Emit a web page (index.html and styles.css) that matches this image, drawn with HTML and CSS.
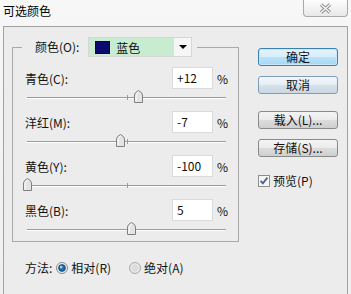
FILE: index.html
```html
<!DOCTYPE html>
<html lang="zh-CN">
<head>
    <meta charset="UTF-8">
    <title>可选颜色</title>
    <link rel="stylesheet" href="styles.css">
</head>
<body>
    <div class="window">
        <div class="titlebar">
            <span class="title">可选颜色</span>
            <button class="close">
                <svg width="13" height="11" viewBox="0 0 13 11">
                    <path d="M2 1.5L11 9.5M11 1.5L2 9.5" stroke="#8e8e8e" stroke-width="3.4"/>
                    <path d="M2 1.5L11 9.5M11 1.5L2 9.5" stroke="#f8f8f8" stroke-width="1.4"/>
                </svg>
            </button>
        </div>

        <div class="dialog">
            <div class="main">
                <fieldset class="group">
                    <legend class="legend">
                        <span class="legend-label">颜色(O):</span>
                        <span class="select">
                            <span class="select-value"><span class="swatch"></span>蓝色</span>
                            <span class="select-arrow"></span>
                        </span>
                    </legend>

                    <div class="row">
                        <div class="row-top">
                            <span class="label">青色(C):</span>
                            <span class="field">+12</span>
                            <span class="unit">%</span>
                        </div>
                        <div class="slider">
                            <span class="tick"></span>
                            <svg class="thumb" style="left: 56%" width="9" height="13" viewBox="0 0 9 13"><path d="M0.5 12.5V5Q0.5 2.5 4.5 0.5Q8.5 2.5 8.5 5V12.5Z" fill="#e4e4e4" stroke="#7f7f7f"/><path d="M2 11.5V5.5Q2 3.5 4.5 2" fill="none" stroke="#fff"/></svg>
                        </div>
                    </div>

                    <div class="row">
                        <div class="row-top">
                            <span class="label">洋红(M):</span>
                            <span class="field">-7</span>
                            <span class="unit">%</span>
                        </div>
                        <div class="slider">
                            <span class="tick"></span>
                            <svg class="thumb" style="left: 46.5%" width="9" height="13" viewBox="0 0 9 13"><path d="M0.5 12.5V5Q0.5 2.5 4.5 0.5Q8.5 2.5 8.5 5V12.5Z" fill="#e4e4e4" stroke="#7f7f7f"/><path d="M2 11.5V5.5Q2 3.5 4.5 2" fill="none" stroke="#fff"/></svg>
                        </div>
                    </div>

                    <div class="row">
                        <div class="row-top">
                            <span class="label">黄色(Y):</span>
                            <span class="field">-100</span>
                            <span class="unit">%</span>
                        </div>
                        <div class="slider">
                            <span class="tick"></span>
                            <svg class="thumb" style="left: 0%" width="9" height="13" viewBox="0 0 9 13"><path d="M0.5 12.5V5Q0.5 2.5 4.5 0.5Q8.5 2.5 8.5 5V12.5Z" fill="#e4e4e4" stroke="#7f7f7f"/><path d="M2 11.5V5.5Q2 3.5 4.5 2" fill="none" stroke="#fff"/></svg>
                        </div>
                    </div>

                    <div class="row">
                        <div class="row-top">
                            <span class="label">黑色(B):</span>
                            <span class="field">5</span>
                            <span class="unit">%</span>
                        </div>
                        <div class="slider">
                            <span class="tick"></span>
                            <svg class="thumb" style="left: 52.5%" width="9" height="13" viewBox="0 0 9 13"><path d="M0.5 12.5V5Q0.5 2.5 4.5 0.5Q8.5 2.5 8.5 5V12.5Z" fill="#e4e4e4" stroke="#7f7f7f"/><path d="M2 11.5V5.5Q2 3.5 4.5 2" fill="none" stroke="#fff"/></svg>
                        </div>
                    </div>
                </fieldset>

                <div class="side">
                    <button class="btn btn-default">确定</button>
                    <button class="btn btn-cancel">取消</button>
                    <button class="btn">载入(L)...</button>
                    <button class="btn">存储(S)...</button>
                    <label class="check">
                        <svg width="12" height="12" viewBox="0 0 12 12">
                            <rect x="0.5" y="0.5" width="11" height="11" fill="#f6f6f6" stroke="#8e8e8e"/>
                            <path d="M2.6 5.8L4.9 8.4L9.4 2.6" fill="none" stroke="#4b6190" stroke-width="1.8"/>
                        </svg>
                        预览(P)
                    </label>
                </div>
            </div>

            <div class="method">
                <span>方法:</span>
                <label class="radio">
                    <svg width="12" height="12" viewBox="0 0 12 12">
                        <circle cx="6" cy="6" r="5.5" fill="#eeeeee" stroke="#8a8a8a"/>
                        <circle cx="6" cy="6" r="3.4" fill="#1d6cae" stroke="#163f66" stroke-width="0.8"/>
                        <circle cx="5.2" cy="5.1" r="1.3" fill="#a6d8f6"/>
                    </svg>
                    相对(R)
                </label>
                <label class="radio">
                    <svg width="12" height="12" viewBox="0 0 12 12">
                        <circle cx="6" cy="6" r="5.5" fill="#e9e9e9" stroke="#a6a6a6"/>
                        <circle cx="6" cy="6" r="3.4" fill="#dcdcdc"/>
                    </svg>
                    绝对(A)
                </label>
            </div>
        </div>
    </div>
</body>
</html>
```

FILE: styles.css
```css
* {
    box-sizing: border-box;
}
html, body {
    margin: 0;
    padding: 0;
}
body {
    width: 351px;
    height: 294px;
    overflow: hidden;
    font-family: "Noto Sans CJK SC", "Noto Sans", sans-serif;
    font-size: 12px;
    color: #111;
    background: #f0f0f0;
}
.window {
    display: flex;
    flex-direction: column;
    height: 294px;
    background: linear-gradient(#f7f7f7, #efefef);
}
.titlebar {
    display: flex;
    justify-content: space-between;
    align-items: flex-start;
    height: 26px;
}
.title {
    padding-left: 3px;
    line-height: 22px;
    color: #000;
}
.close {
    display: flex;
    align-items: center;
    justify-content: center;
    width: 45px;
    height: 17px;
    margin-right: 3px;
    padding: 0;
    border: 1px solid #a9a9a9;
    border-top: none;
    border-radius: 0 0 4px 4px;
    background: linear-gradient(#fdfdfd, #e8e8e8);
}
.dialog {
    flex: 1;
    margin: 0 3px;
    padding: 10px 8px 0;
    border: 1px solid #a2a2a2;
    border-bottom: none;
    background: #ececec;
}
.main {
    display: flex;
    align-items: flex-start;
}
.group {
    width: 227px;
    min-width: 0;
    margin: 0;
    padding: 10px 9px 0 12px;
    border: 1px solid #a9a9a9;
}
.legend {
    display: flex;
    align-items: center;
    margin-left: -3px;
    padding: 0 5px 0 13px;
}
.legend-label {
    margin-right: 9px;
    line-height: 20px;
}
.select {
    display: flex;
    width: 104px;
    height: 20px;
    border: 1px solid #d6d6d6;
    background: #f6f6f6;
}
.select-value {
    flex: 1;
    display: flex;
    align-items: center;
    padding-left: 6px;
    background: #c8ecd0;
}
.swatch {
    width: 15px;
    height: 13px;
    margin-right: 6px;
    background: #0b0b6e;
    border: 1px solid #05053c;
}
.select-arrow {
    display: flex;
    align-items: center;
    justify-content: center;
    width: 17px;
}
.select-arrow::before {
    content: "";
    border-left: 4px solid transparent;
    border-right: 4px solid transparent;
    border-top: 4px solid #000;
}
.row-top {
    display: flex;
    align-items: center;
    height: 22px;
}
.label {
    flex: 1;
}
.field {
    width: 41px;
    height: 22px;
    padding-left: 4px;
    line-height: 20px;
    background: #fff;
    border: 1px solid #dadada;
}
.unit {
    width: 12px;
    margin-left: 4px;
}
.slider {
    position: relative;
    height: 22px;
    margin: 0 3px 0 2px;
    background:
        linear-gradient(#9c9c9c, #9c9c9c) 0 8px / 100% 1px no-repeat,
        linear-gradient(#fff, #fff) 0 9px / 100% 1px no-repeat;
}
.row:last-child .slider {
    height: 20px;
}
.tick {
    position: absolute;
    left: 50%;
    top: 6px;
    width: 1px;
    height: 5px;
    background: #9c9c9c;
}
.thumb {
    position: absolute;
    top: 1px;
    margin-left: -4px;
}
.side {
    display: flex;
    flex-direction: column;
    margin: 11px 0 0 19px;
}
.btn {
    width: 80px;
    height: 18px;
    margin-bottom: 10px;
    padding: 0;
    font: inherit;
    line-height: 16px;
    color: #111;
    border: 1px solid #8a8a8a;
    border-radius: 3px;
    background: linear-gradient(#f4f4f4 0%, #ebebeb 50%, #dddddd 50%, #cfcfcf 100%);
}
.btn-default {
    border-color: #3c7fb1;
    background: linear-gradient(#e6f4fc 0%, #d5eefc 50%, #bbe3f9 50%, #a6d6f3 100%);
    box-shadow: inset 0 0 0 1px #c7e8fa;
}
.btn-cancel {
    margin-bottom: 17px;
    border-color: #7f9db9;
    background: linear-gradient(#f1f6fa 0%, #e6eef5 50%, #d6e2ec 50%, #c9d8e5 100%);
}
.check {
    display: flex;
    align-items: center;
    gap: 3px;
    margin-top: 8px;
    line-height: 12px;
}
.method {
    display: flex;
    align-items: center;
    margin-top: 18px;
    padding-left: 13px;
    line-height: 16px;
}
.radio {
    display: flex;
    align-items: center;
    gap: 3px;
    margin-left: 4px;
}
.radio + .radio {
    margin-left: 18px;
}
```
